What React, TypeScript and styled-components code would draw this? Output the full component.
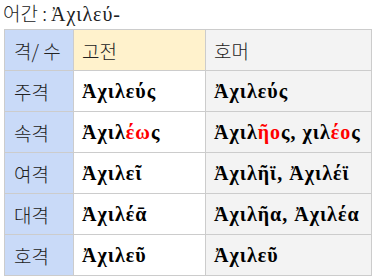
import * as React from 'react';
import styled, { createGlobalStyle } from 'styled-components';

interface Row {
    label: string;
    classic: React.ReactNode;
    homer: React.ReactNode;
}

const Red = styled.span`
color: #ff0000;
`

const rows: Row[] = [
    { label: '주격', classic: 'Ἀχιλεύς', homer: 'Ἀχιλεύς' },
    {
        label: '속격',
        classic: <>Ἀχιλ<Red>έω</Red>ς</>,
        homer: <>Ἀχιλ<Red>ῆο</Red>ς, χιλ<Red>έο</Red>ς</>,
    },
    { label: '여격', classic: 'Ἀχιλεῖ', homer: 'Ἀχιλῆϊ, Ἀχιλέϊ' },
    { label: '대격', classic: 'Ἀχιλέᾱ', homer: 'Ἀχιλῆα, Ἀχιλέα' },
    { label: '호격', classic: 'Ἀχιλεῦ', homer: 'Ἀχιλεῦ' },
];

const App = () => {
    return <>
        <GlobalStyle />
        <StyledPage>
            <StyledHeading>어간 : <StyledGreek>Ἀχιλεύ-</StyledGreek></StyledHeading>
            <StyledTable>
                <colgroup>
                    <col style={{ width: 69 }} />
                    <col style={{ width: 132 }} />
                    <col style={{ width: 166 }} />
                </colgroup>
                <thead>
                    <tr>
                        <StyledLabelCell as="th" $h={39}>격/ 수</StyledLabelCell>
                        <StyledHeadCell $bg="#fff2cc">고전</StyledHeadCell>
                        <StyledHeadCell $bg="#f3f3f3">호머</StyledHeadCell>
                    </tr>
                </thead>
                <tbody>
                    {rows.map(r => <tr key={r.label}>
                        <StyledLabelCell>{r.label}</StyledLabelCell>
                        <StyledFormCell $bg="#ffffff">{r.classic}</StyledFormCell>
                        <StyledFormCell $bg="#f3f3f3">{r.homer}</StyledFormCell>
                    </tr>)}
                </tbody>
            </StyledTable>
        </StyledPage>
    </>
}

const GlobalStyle = createGlobalStyle`
body {
    margin: 0;
    background: #ffffff;
}
`

const StyledPage = styled.div`
padding: 0 4px;
color: #222;
`

const StyledHeading = styled.div`
display: flex;
align-items: baseline;
height: 29px;
margin-left: -1px;
font-family: "Noto Sans CJK KR", sans-serif;
font-weight: 300;
font-size: 19px;
line-height: 26px;
color: #202122;
white-space: pre;
`

const StyledGreek = styled.span`
font-family: "Liberation Serif", "DejaVu Serif", serif;
font-weight: normal;
font-size: 20px;
letter-spacing: 0.9px;
`

const StyledTable = styled.table`
border-collapse: collapse;
table-layout: fixed;
width: 368px;
`

const StyledCell = styled.td<{ $h?: number }>`
border: 1px solid #cccccc;
height: ${p => p.$h ?? 40}px;
padding: 0 8px;
text-align: left;
vertical-align: middle;
white-space: nowrap;
`

const StyledLabelCell = styled(StyledCell)`
padding-left: 9px;
background: #c9daf8;
font-family: "Noto Sans CJK KR", sans-serif;
font-weight: 300;
font-size: 19px;
color: #222;
`

const StyledHeadCell = styled(StyledCell)<{ $bg: string }>`
background: ${p => p.$bg};
font-family: "Noto Sans CJK KR", sans-serif;
font-weight: 300;
font-size: 19px;
color: #222;
`

const StyledFormCell = styled(StyledCell)<{ $bg: string }>`
background: ${p => p.$bg};
font-family: "Liberation Serif", "DejaVu Serif", serif;
font-weight: bold;
font-size: 20px;
letter-spacing: 1px;
color: #000;
`

export default App;
